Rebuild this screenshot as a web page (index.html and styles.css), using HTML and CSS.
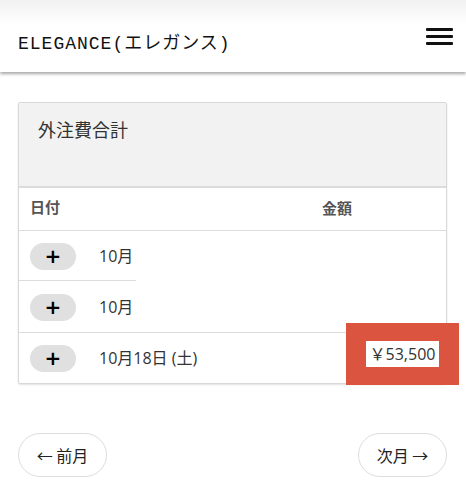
FILE: index.html
```html
<!DOCTYPE html>
<html lang="ja">
<head>
  <meta charset="UTF-8" />
  <meta name="viewport" content="width=device-width, initial-scale=1.0" />
  <title>ELEGANCE</title>
  <link rel="stylesheet" href="styles.css">
</head>
<body>
  <header class="topbar">
    <div class="brand">ELEGANCE(エレガンス)</div>
    <button class="burger" aria-label="menu">
      <span></span><span></span><span></span>
    </button>
  </header>

  <main class="content">
    <section class="card">
      <div class="card-head">外注費合計</div>
      <div class="row head">
        <div class="col-date">日付</div>
        <div class="col-amount">金額</div>
      </div>
      <div class="row cut">
        <button class="plus">+</button>
        <div class="col-date">10月</div>
      </div>
      <div class="row">
        <button class="plus">+</button>
        <div class="col-date">10月</div>
      </div>
      <div class="row last">
        <button class="plus">+</button>
        <div class="col-date">10月18日 (土)</div>
        <div class="mark"><span class="amount">￥53,500</span></div>
      </div>
    </section>

    <nav class="pager">
      <button class="pill">← 前月</button>
      <button class="pill">次月 →</button>
    </nav>
  </main>
</body>
</html>
```

FILE: styles.css
```css
body, html {
  margin: 0;
  padding: 0;
  background: #fff;
  color: #333;
  font-family: "Open Sans", "Noto Sans CJK JP", sans-serif;
}
.topbar {
  height: 72px;
  display: flex;
  align-items: center;
  justify-content: space-between;
  padding: 10px 13px 0 18px;
  box-sizing: border-box;
  background: linear-gradient(#f1f1f1, #fff 24px);
  box-shadow: 0 2px 3px rgba(0, 0, 0, 0.35);
}
.brand {
  font-family: "Liberation Mono", "Noto Sans CJK JP", monospace;
  font-size: 18px;
  letter-spacing: 1px;
  color: #111;
}
.burger {
  background: none;
  border: none;
  padding: 0;
  width: 27px;
  display: flex;
  flex-direction: column;
  gap: 4px;
  margin-top: -10px;
}
.burger span {
  display: block;
  height: 3px;
  background: #111;
  border-radius: 1px;
}
.content {
  padding: 30px 19px 0 18px;
}
.card {
  border: 1px solid #d8d8d8;
  border-radius: 2px;
  box-shadow: 0 1px 2px rgba(0, 0, 0, 0.12);
}
.card-head {
  background: #f2f2f2;
  height: 85px;
  padding: 13px 19px 0;
  box-sizing: border-box;
  font-size: 18px;
  color: #333;
  border-bottom: 2px solid #dcdcdc;
}
.row {
  position: relative;
  display: flex;
  align-items: center;
  height: 50px;
  padding-left: 11px;
  border-bottom: 1px solid #dcdcdc;
  font-size: 16px;
}
.row.head {
  height: 43px;
  font-size: 15px;
  font-weight: bold;
  color: #555;
  padding-bottom: 3px;
  box-sizing: border-box;
}
.row.head .col-amount {
  margin-left: 262px;
}
.row.cut {
  border-bottom-color: transparent;
  background: linear-gradient(#dcdcdc, #dcdcdc) left bottom / 117px 1px no-repeat;
}
.row.last {
  border-bottom: none;
}
.plus {
  width: 46px;
  height: 27px;
  border: none;
  border-radius: 14px;
  background: #e0e0e0;
  color: #000;
  font-family: "DejaVu Sans", sans-serif;
  font-size: 20px;
  font-weight: bold;
  line-height: 27px;
  padding: 0;
  margin-right: 23px;
}
.col-date {
  margin-top: -3px;
}
.mark {
  position: absolute;
  right: -13px;
  top: -10px;
  width: 113px;
  height: 62px;
  background: #db5440;
  display: flex;
  align-items: center;
  justify-content: center;
}
.amount {
  background: #fff;
  padding: 3px 4px;
  font-size: 16px;
  color: #333;
  line-height: 20px;
}
.pager {
  display: flex;
  justify-content: space-between;
  margin-top: 49px;
}
.pill {
  background: #fff;
  border: 1px solid #ddd;
  border-radius: 22px;
  height: 44px;
  width: 89px;
  font-family: "Noto Sans CJK JP", sans-serif;
  font-size: 16px;
  color: #222;
  padding: 0;
}
```
